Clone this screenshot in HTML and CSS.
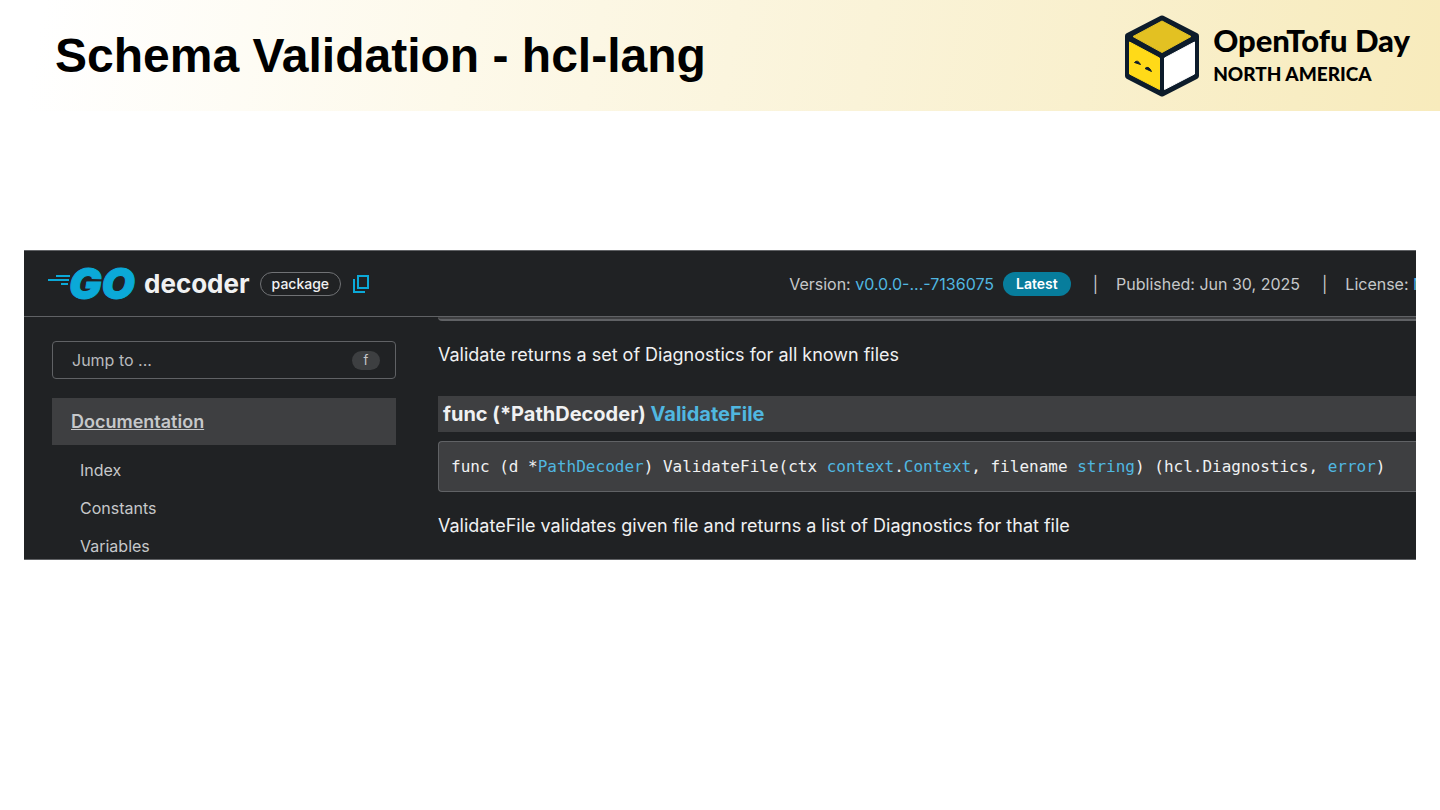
FILE: index.html
```html
<!DOCTYPE html>
<html lang="en">
<head>
  <meta charset="UTF-8">
  <meta name="viewport" content="width=device-width, initial-scale=1.0">
  <title>Schema Validation - hcl-lang</title>
  <link rel="stylesheet" href="styles.css">
</head>
<body>
  <header class="banner">
    <h1>Schema Validation - hcl-lang</h1>
    <div class="event">
      <svg class="cube" width="76" height="82" viewBox="0 0 76 82" aria-hidden="true">
        <path d="M38 3.5 72 21V61L38 78.5 4 61V21Z" fill="#0d1c2b" stroke="#0d1c2b" stroke-width="6" stroke-linejoin="round"/>
        <path d="M38 6 67 21.5 38 37.5 9 21.5Z" fill="#e3c122" stroke="#e3c122" stroke-linejoin="round"/>
        <path d="M5.5 27 35.5 43V74.5L5.5 59Z" fill="#ffda18" stroke="#ffda18" stroke-linejoin="round"/>
        <path d="M40.5 43 70.5 27V59L40.5 74.5Z" fill="#fff" stroke="#fff" stroke-linejoin="round"/>
        <path d="M10.5 47.5Q13.5 44 16.5 49.5ZM21 53.5Q24.5 50 27.5 56.5Z" fill="#0d1c2b" stroke="#0d1c2b"/>
      </svg>
      <div class="event-text">
        <span class="event-name">OpenTofu Day</span>
        <span class="event-place">NORTH AMERICA</span>
      </div>
    </div>
  </header>

  <section class="docs">
    <header class="docs-header">
      <svg class="go-logo" width="88" height="36" viewBox="0 0 88 36" role="img" aria-label="Go">
        <path d="M8 10H22M0 14H21M13 18H20" stroke="#0ba9d8" stroke-width="2"/>
        <text x="21" y="33" class="go-text">GO</text>
      </svg>
      <h2>decoder</h2>
      <span class="chip">package</span>
      <button type="button" class="copy" aria-label="Copy path">
        <svg width="16" height="18" viewBox="0 0 16 18" fill="none" stroke="#0ba9d8" stroke-width="2">
          <path d="M5 1H15V13H5ZM1 4V17H12"/>
        </svg>
      </button>
      <div class="details">
        <span>Version: <a href="#versions">v0.0.0-...-7136075</a></span>
        <span class="latest">Latest</span>
        <span class="published">Published: Jun 30, 2025</span>
        <span class="license">License: <a href="#license">MPL-2.0</a></span>
      </div>
    </header>

    <div class="docs-body">
      <nav class="sidebar">
        <label class="search">
          <input type="text" placeholder="Jump to ..." aria-label="Jump to">
          <kbd>f</kbd>
        </label>
        <a class="current" href="#documentation">Documentation</a>
        <ul>
          <li><a href="#index">Index</a></li>
          <li><a href="#constants">Constants</a></li>
          <li><a href="#variables">Variables</a></li>
        </ul>
      </nav>
      <main class="content" id="documentation">
        <div class="code-end"></div>
        <p>Validate returns a set of Diagnostics for all known files</p>
        <h3>func (*PathDecoder) <a href="#validatefile">ValidateFile</a></h3>
        <pre>func (d *<a href="#pathdecoder">PathDecoder</a>) ValidateFile(ctx <a href="#context">context</a>.<a href="#context">Context</a>, filename <a href="#string">string</a>) (hcl.Diagnostics, <a href="#error">error</a>)</pre>
        <p>ValidateFile validates given file and returns a list of Diagnostics for that file</p>
      </main>
    </div>
  </section>
</body>
</html>
```
FILE: styles.css
```css
* {
  box-sizing: border-box;
}
body {
  margin: 0;
  background-color: #fff;
  font-family: Inter, sans-serif;
}
h1, h2, h3, p, ul, pre {
  margin: 0;
}
a {
  color: #50b7e0;
  text-decoration: none;
}

/* Slide banner */
.banner {
  display: flex;
  align-items: center;
  justify-content: space-between;
  height: 111px;
  padding: 0 30px 0 55px;
  background: linear-gradient(100deg, #fff 3%, #fdf9ea 32%, #faf3d8 60%, #f8edc3 90%, #f8ebbc 100%);
}
h1 {
  font-family: "Liberation Sans", Arial, sans-serif;
  font-size: 48px;
  line-height: 56px;
  color: #000;
}
.event {
  display: flex;
  align-items: center;
  gap: 13px;
}
.event-text {
  display: flex;
  flex-direction: column;
  font-family: Lato, sans-serif;
  font-weight: 900;
  color: #000;
}
.event-name {
  font-size: 31px;
  line-height: 36px;
}
.event-place {
  font-size: 19px;
  line-height: 32px;
}

/* Package page */
.docs {
  margin: 139px 24px 0;
  overflow: hidden;
  background-color: #202224;
  border-top: 1px solid #606265;
  border-bottom: 1px solid #606265;
  color: #f0f1f2;
}
.docs-header {
  display: flex;
  align-items: center;
  height: 66px;
  padding-left: 24px;
  border-bottom: 1px solid #606265;
}
.go-logo {
  overflow: visible;
}
.go-text {
  font-family: Inter, sans-serif;
  font-size: 43px;
  font-weight: 900;
  font-style: italic;
  fill: #0ba9d8;
  stroke: #0ba9d8;
  stroke-width: 1px;
}
h2 {
  margin-left: 8px;
  font-size: 26px;
  line-height: 32px;
}
.chip {
  margin: 0 12px 0 10px;
  padding: 0 11px;
  border: 1px solid #707275;
  border-radius: 12px;
  font-size: 14px;
  font-weight: 500;
  line-height: 22px;
}
.copy {
  display: flex;
  padding: 0;
  border: none;
  background: none;
  cursor: pointer;
}
.details {
  display: flex;
  align-items: center;
  margin-left: auto;
  font-size: 16px;
  color: #c6c8ca;
  white-space: nowrap;
}
.latest {
  margin-left: 9px;
  padding: 0 13px;
  border-radius: 12px;
  background-color: #077d9c;
  color: #fff;
  font-size: 14px;
  font-weight: 600;
  line-height: 24px;
}
.published::before,
.license::before {
  content: "|";
  margin: 0 18px 0 22px;
}
.license {
  width: 116px;
  overflow: hidden;
}
.docs-body {
  display: grid;
  grid-template-columns: 344px minmax(0, 1fr);
  gap: 42px;
  padding-left: 28px;
}
.sidebar {
  padding-top: 24px;
  color: #c6c8ca;
}
.search {
  display: flex;
  align-items: center;
  height: 38px;
  padding: 0 15px 0 19px;
  border: 1px solid #606265;
  border-radius: 4px;
}
.search input {
  flex: 1;
  min-width: 0;
  padding: 0;
  border: none;
  outline: none;
  background: none;
  color: inherit;
  font-family: inherit;
  font-size: 16px;
}
.search input::placeholder {
  color: #b8babd;
}
kbd {
  width: 28px;
  border-radius: 10px;
  background-color: #3d3f41;
  font-family: inherit;
  font-size: 13px;
  line-height: 19px;
  text-align: center;
}
.current {
  display: block;
  margin-top: 19px;
  padding: 0 19px;
  background-color: #3e3f41;
  color: #c6c8ca;
  font-size: 18px;
  font-weight: 600;
  line-height: 47px;
  text-decoration: underline;
}
.sidebar ul {
  display: grid;
  gap: 14px;
  padding: 13px 28px 0;
  list-style: none;
  font-size: 16px;
  line-height: 24px;
}
.sidebar li a {
  color: #c6c8ca;
}
.code-end {
  height: 4px;
  border-bottom: 2px solid #606265;
  border-bottom-left-radius: 4px;
  background-color: #3e3f41;
}
.content p {
  padding: 22px 0 21px;
  font-size: 18px;
  line-height: 24px;
}
h3 {
  margin-top: 8px;
  padding: 0 5px;
  background-color: #3e3f41;
  font-size: 20px;
  font-weight: 700;
  line-height: 36px;
}
pre {
  margin-top: 9px;
  padding: 0 12px;
  border: 1px solid #606265;
  border-right: none;
  border-radius: 4px 0 0 4px;
  background-color: #3e3f41;
  font-family: "DejaVu Sans Mono", monospace;
  font-size: 16px;
  line-height: 49px;
}
```
